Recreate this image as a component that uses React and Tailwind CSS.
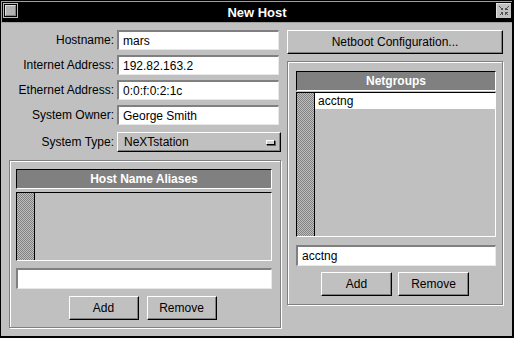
import React from "react";

const font = { fontFamily: '"Liberation Sans", Arial, sans-serif' };

function Field({ label, value }) {
  return (
    <div className="flex items-center h-[20px]">
      <div className="w-[106px] text-right text-[12px] text-black leading-none pr-[1px]">{label}</div>
      <div className="ml-[2px] w-[162px] h-[20px] bg-white border-t-2 border-l-2 border-[#808080] border-b border-r border-b-[#e8e8e8] border-r-[#e8e8e8] flex items-center pl-[4px] text-[12px] text-black leading-none">
        {value}
      </div>
    </div>
  );
}

function Button({ children, className = "" }) {
  return (
    <div
      className={
        "flex items-center justify-center bg-[#c0c0c0] border-t border-l border-white border-b border-r border-b-black border-r-black shadow-[inset_-1px_-1px_0_#808080] text-[12px] text-black leading-none " +
        className
      }
    >
      {children}
    </div>
  );
}

function Checker({ id }) {
  return (
    <div className="w-[18px] h-full border-r border-black shrink-0">
      <svg width="17" height="100%" className="block h-full" shapeRendering="crispEdges">
        <defs>
          <pattern id={id} width="2" height="2" patternUnits="userSpaceOnUse">
            <rect width="2" height="2" fill="#c0c0c0" />
            <rect x="0" y="0" width="1" height="1" fill="#808080" />
            <rect x="1" y="1" width="1" height="1" fill="#808080" />
          </pattern>
        </defs>
        <rect width="100%" height="100%" fill={`url(#${id})`} />
      </svg>
    </div>
  );
}

function Header({ children }) {
  return (
    <div className="h-[20px] bg-[#808080] border-t border-l border-black border-b border-r border-b-white border-r-white flex items-center justify-center text-white font-bold text-[12px] leading-none">
      {children}
    </div>
  );
}

export default function App() {
  return (
    <div
      className="w-[514px] h-[338px] bg-black pl-[1px] pt-[1px] pr-[2px] pb-[2px] flex flex-col"
      style={font}
    >
      {/* Title bar */}
      <div className="h-[22px] border-t border-l border-b border-[#a0a0a0] flex items-start relative">
        <div className="ml-[1px] mt-[1px] w-[15px] h-[15px] border border-[#b8b8b8] bg-black p-[1px]">
          <div className="w-full h-full bg-[#b0b0b0] border-t border-l border-[#e0e0e0] border-b border-r border-b-[#808080] border-r-[#808080]" />
        </div>
        <div className="flex-1 h-full flex items-center justify-center text-white font-bold text-[13px] leading-none">
          New Host
        </div>
        <div className="mr-[1px] mt-[1px] w-[15px] h-[15px] bg-[#c0c0c0] border-t border-l border-[#e0e0e0]">
          <svg width="14" height="14" viewBox="0 0 14 14" className="block">
            <g stroke="#505050" strokeWidth="1" fill="none" shapeRendering="crispEdges">
              <path d="M2.5 2.5 L5.5 5.5 M5.5 3.5 V5.5 H3.5" />
              <path d="M11.5 2.5 L8.5 5.5 M8.5 3.5 V5.5 H10.5" />
              <path d="M2.5 11.5 L5.5 8.5 M5.5 10.5 V8.5 H3.5" />
              <path d="M11.5 11.5 L8.5 8.5 M8.5 10.5 V8.5 H10.5" />
            </g>
          </svg>
        </div>
      </div>

      {/* Body */}
      <div className="flex-1 bg-[#c0c0c0] flex pl-[8px] pt-[7px]">
        {/* Left column */}
        <div className="w-[272px] flex flex-col">
          <div className="flex flex-col gap-[5px]">
            <Field label="Hostname:" value="mars" />
            <Field label="Internet Address:" value="192.82.163.2" />
            <Field label="Ethernet Address:" value="0:0:f:0:2:1c" />
            <Field label="System Owner:" value="George Smith" />
          </div>
          <div className="flex items-center h-[20px] mt-[7px]">
            <div className="w-[106px] text-right text-[12px] text-black leading-none pr-[1px]">System Type:</div>
            <div className="ml-[2px] w-[164px] h-[20px] bg-[#c0c0c0] border-t border-l border-white border-b border-r border-b-black border-r-black shadow-[inset_-1px_-1px_0_#808080] flex items-center pl-[6px] pr-[5px] text-[12px] text-black leading-none">
              <span className="flex-1">NeXTstation</span>
              <div className="w-[9px] h-[5px] bg-[#d0d0d0] border-t border-l border-white border-b border-r border-b-black border-r-black shadow-[1px_1px_0_#606060]" />
            </div>
          </div>

          {/* Host Name Aliases box */}
          <div className="mt-[8px] w-[272px] h-[168px] border border-[#808080] shadow-[inset_1px_1px_0_#fff,1px_1px_0_#fff] pl-[6px] pt-[8px] flex flex-col">
            <div className="w-[256px] flex flex-col">
              <Header>Host Name Aliases</Header>
              <div className="mt-[3px] h-[69px] border-t border-l border-black border-b border-r border-b-white border-r-white flex">
                <Checker id="chk1" />
                <div className="flex-1" />
              </div>
              <div className="mt-[7px] h-[21px] bg-white border-t-2 border-l-2 border-[#808080] border-b border-r border-b-[#e8e8e8] border-r-[#e8e8e8]" />
              <div className="mt-[7px] flex justify-center gap-[8px] pr-[3px]">
                <Button className="w-[70px] h-[24px]">Add</Button>
                <Button className="w-[70px] h-[24px]">Remove</Button>
              </div>
            </div>
          </div>
        </div>

        {/* Right column */}
        <div className="ml-[6px] w-[216px] flex flex-col">
          <Button className="w-[216px] h-[24px]">Netboot Configuration...</Button>
          <div className="mt-[7px] w-[216px] h-[244px] border border-[#808080] shadow-[inset_1px_1px_0_#fff,1px_1px_0_#fff] pl-[8px] pt-[9px] flex flex-col">
            <div className="w-[200px] flex flex-col">
              <Header>Netgroups</Header>
              <div className="mt-[1px] h-[145px] border-t border-l border-black border-b border-r border-b-white border-r-white flex">
                <Checker id="chk2" />
                <div className="flex-1 flex flex-col">
                  <div className="h-[16px] bg-white flex items-center pl-[3px] text-[12px] text-black leading-none">
                    acctng
                  </div>
                </div>
              </div>
              <div className="mt-[8px] h-[21px] bg-white border-t-2 border-l-2 border-[#808080] border-b border-r border-b-[#e8e8e8] border-r-[#e8e8e8] flex items-center pl-[4px] text-[12px] text-black leading-none">
                acctng
              </div>
              <div className="mt-[6px] flex justify-center gap-[6px] pr-[2px]">
                <Button className="w-[71px] h-[24px]">Add</Button>
                <Button className="w-[71px] h-[24px]">Remove</Button>
              </div>
            </div>
          </div>
        </div>
      </div>
    </div>
  );
}
